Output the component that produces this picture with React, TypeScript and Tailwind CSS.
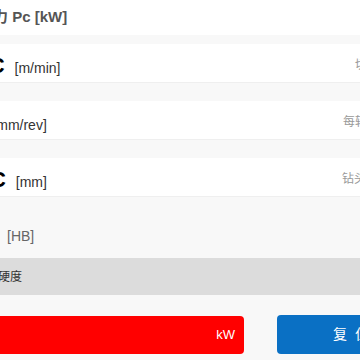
import React from 'react';

const font = { fontFamily: '"Liberation Sans", Arial, "Noto Sans CJK SC", sans-serif' };

type Row = { sym: string; unit: string; desc: string; descPad: string };

const rows: Row[] = [
  { sym: 'VC', unit: '[m/min]', desc: '切削速度', descPad: 'ml-[381px]' },
  { sym: 'f', unit: '[mm/rev]', desc: '每转进给量', descPad: 'ml-[369px]' },
  { sym: 'DC', unit: '[mm]', desc: '钻头直径', descPad: 'ml-[368px]' },
];

function InputRow({ row, first }: { row: Row; first?: boolean }) {
  return (
    <div className={`relative h-[39px] bg-white border-b border-[#efefef] ${first ? 'mt-[9px]' : 'mt-[18px]'}`}>
      <div className="flex items-baseline pt-[9px] h-full">
        <span className="text-[22px] font-bold text-black leading-[25px]">{row.sym}</span>
        <span className={`${row.sym === 'f' ? 'ml-[11px]' : 'ml-[10px]'} text-[14px] text-[#333]`}>{row.unit}</span>
      </div>
      {/* description column on the right */}
      <span className={`absolute top-[12px] left-0 ${row.descPad} text-[12px] text-[#999] whitespace-nowrap`}>
        {row.desc}
      </span>
    </div>
  );
}

export default function App() {
  return (
    <div className="w-[360px] h-[360px] overflow-hidden bg-[#f8f8f8]" style={font}>
      <div className="-ml-[26px] w-[480px]">
        {/* Title row */}
        <div className="h-[35px] bg-white flex items-center">
          <span className="-ml-[26px] text-[15px] font-bold text-[#555] whitespace-nowrap">所需动力 Pc [kW]</span>
        </div>

        {rows.map((r, i) => (
          <InputRow key={r.unit} row={r} first={i === 0} />
        ))}

        {/* Hardness row */}
        <div className="h-[61px] flex items-end pb-[11px]">
          <span className="ml-[33px] text-[14px] text-[#666]">[HB]</span>
        </div>

        {/* Material bar */}
        <div className="h-[37px] bg-[#dcdcdc] flex items-center">
          <span className="text-[12px] text-[#333]">材料硬度</span>
        </div>

        {/* Result + reset */}
        <div className="mt-[20px] flex items-center">
          <div className="h-[38px] w-[270px] bg-[#ff0000] rounded-[4px] flex items-center justify-end pr-[9px]">
            <span className="text-[13px] text-white">kW</span>
          </div>
          <button className="ml-[33px] h-[39px] w-[148px] bg-[#0a70c4] rounded-[4px] text-white text-[14px] tracking-[8px] flex items-center justify-center pl-[8px]">
            复位
          </button>
        </div>
      </div>
    </div>
  );
}
